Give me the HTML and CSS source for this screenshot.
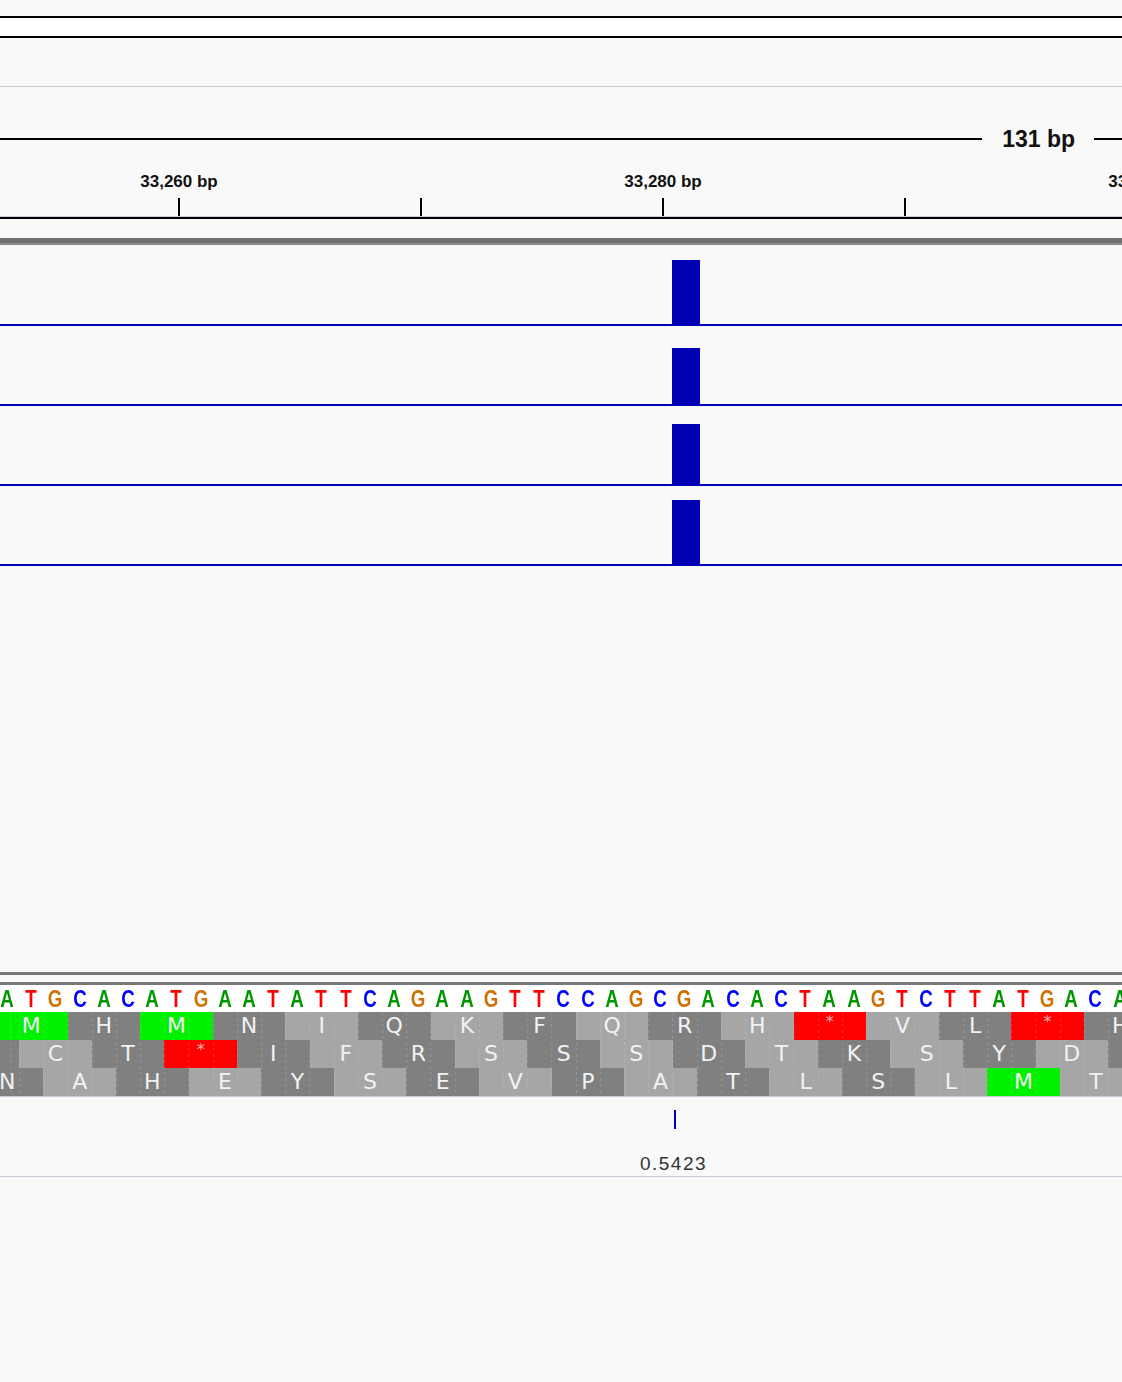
FILE: index.html
```html
<!DOCTYPE html>
<html>
<head>
<meta charset="utf-8">
<link rel="stylesheet" href="styles.css">
</head>
<body>
<div class="page">
  <div class="gap-top"></div>
  <div class="header-band"></div>
  <div class="gap-header"></div>

  <div class="ruler">
    <div class="span-row">
      <div class="span-line"></div>
      <div class="span-text">131 bp</div>
      <div class="span-line short"></div>
    </div>
    <div class="ticks">
      <div class="tick-cell"><div class="tick-label">33,260 bp</div><div class="tick"></div></div>
      <div class="tick-cell"><div class="tick-label"></div><div class="tick"></div></div>
      <div class="tick-cell"><div class="tick-label">33,280 bp</div><div class="tick"></div></div>
      <div class="tick-cell"><div class="tick-label"></div><div class="tick"></div></div>
      <div class="tick-cell"><div class="tick-label">33,300 bp</div><div class="tick"></div></div>
    </div>
    <div class="ruler-base"></div>
  </div>

  <div class="gap-data"></div>
  <div class="panel-divider"></div>

  <div class="track t1"><div class="bar" style="height:64px"></div></div>
  <div class="track"><div class="bar" style="height:56px"></div></div>
  <div class="track"><div class="bar" style="height:60px"></div></div>
  <div class="track"><div class="bar" style="height:64px"></div></div>

  <div class="gap-empty"></div>

  <div class="seq-track">
    <div class="seq-line"></div>
    <div class="seq-gap"></div>
    <div class="seq-line"></div>
    <div class="bases">
      <span class="A">A</span><span class="T">T</span><span class="G">G</span><span class="C">C</span><span class="A">A</span><span class="C">C</span><span class="A">A</span><span class="T">T</span><span class="G">G</span><span class="A">A</span>
      <span class="A">A</span><span class="T">T</span><span class="A">A</span><span class="T">T</span><span class="T">T</span><span class="C">C</span><span class="A">A</span><span class="G">G</span><span class="A">A</span><span class="A">A</span>
      <span class="G">G</span><span class="T">T</span><span class="T">T</span><span class="C">C</span><span class="C">C</span><span class="A">A</span><span class="G">G</span><span class="C">C</span><span class="G">G</span><span class="A">A</span>
      <span class="C">C</span><span class="A">A</span><span class="C">C</span><span class="T">T</span><span class="A">A</span><span class="A">A</span><span class="G">G</span><span class="T">T</span><span class="C">C</span><span class="T">T</span>
      <span class="T">T</span><span class="A">A</span><span class="T">T</span><span class="G">G</span><span class="A">A</span><span class="C">C</span><span class="A">A</span>
    </div>
    <div class="aa-block">
      <div class="aa-row f1">
        <span class="g">M</span><span class="d">H</span><span class="g">M</span><span class="d">N</span><span class="l">I</span><span class="d">Q</span><span class="l">K</span><span class="d">F</span><span class="l">Q</span><span class="d">R</span><span class="l">H</span><span class="r">*</span><span class="l">V</span><span class="d">L</span><span class="r">*</span><span class="d">H</span>
      </div>
      <div class="aa-row f2">
        <span class="d"></span><span class="l">C</span><span class="d">T</span><span class="r">*</span><span class="d">I</span><span class="l">F</span><span class="d">R</span><span class="l">S</span><span class="d">S</span><span class="l">S</span><span class="d">D</span><span class="l">T</span><span class="d">K</span><span class="l">S</span><span class="d">Y</span><span class="l">D</span><span class="d"></span>
      </div>
      <div class="aa-row f3">
        <span class="d">N</span><span class="l">A</span><span class="d">H</span><span class="l">E</span><span class="d">Y</span><span class="l">S</span><span class="d">E</span><span class="l">V</span><span class="d">P</span><span class="l">A</span><span class="d">T</span><span class="l">L</span><span class="d">S</span><span class="l">L</span><span class="g">M</span><span class="l">T</span>
      </div>
    </div>
  </div>

  <div class="score-track">
    <div class="score-mark">
      <div class="score-tick"></div>
      <div class="score-label">0.5423</div>
    </div>
  </div>
</div>
</body>
</html>
```

FILE: styles.css
```css
html, body {
  margin: 0;
  padding: 0;
  background: #f9f9f9;
}
.page {
  width: 1122px;
  height: 1382px;
  overflow: hidden;
  background: #f9f9f9;
  font-family: "Liberation Sans", Arial, sans-serif;
}
.gap-top { height: 16px; }
.header-band {
  height: 18px;
  background: #ffffff;
  border-top: 2px solid #000;
  border-bottom: 2px solid #000;
}
.gap-header { height: 48px; }

.ruler {
  border-top: 1px solid #c8c8d8;
  overflow: hidden;
}
.span-row {
  margin-top: 40px;
  height: 24px;
  display: flex;
  align-items: center;
}
.span-line {
  flex: 1;
  height: 2px;
  background: #000;
}
.span-line.short {
  flex: 0 0 28px;
}
.span-text {
  padding: 0 19px 0 20px;
  font-size: 23px;
  font-weight: bold;
  color: #111;
  line-height: 24px;
}
.ticks {
  margin-top: 22px;
  padding-left: 58px;
  display: flex;
}
.tick-cell {
  flex: 0 0 242px;
  display: flex;
  flex-direction: column;
  align-items: center;
}
.tick-label {
  height: 18px;
  line-height: 18px;
  font-size: 17px;
  font-weight: bold;
  color: #111;
  white-space: nowrap;
}
.tick {
  margin-top: 7px;
  width: 2px;
  height: 18px;
  background: #000;
}
.ruler-base {
  height: 2px;
  border-top: 1px solid #c8c8d8;
  background: #000;
}

.gap-data { height: 19px; }
.panel-divider {
  height: 5px;
  background: #707070;
  border-bottom: 2px solid #8e8e8e;
}

.track {
  height: 78px;
  border-bottom: 2px solid #0000b2;
  display: flex;
  align-items: flex-end;
}
.track.t1 { height: 79px; }
.bar {
  margin-left: 672px;
  width: 28px;
  background: #0000b2;
}

.gap-empty { height: 406px; }

.seq-line {
  height: 3px;
  background: #787878;
}
.seq-gap { height: 7px; }
.bases {
  height: 27px;
  background: #ffffff;
  display: flex;
  margin-left: -5px;
  overflow: visible;
  white-space: nowrap;
}
.bases span {
  flex: 0 0 24.2px;
  text-align: center;
  font-family: "Liberation Sans", Arial, sans-serif;
  font-weight: bold;
  font-size: 24px;
  line-height: 27px;
  transform: scaleX(0.78);
}
.bases .A { color: #009600; }
.bases .C { color: #0000ff; }
.bases .G { color: #d17105; }
.bases .T { color: #ff0000; }

.aa-block {
  position: relative;
  overflow: hidden;
  border-bottom: 1px solid #c8c8d8;
}
.aa-block::after {
  content: "";
  position: absolute;
  left: 0;
  top: 0;
  right: 0;
  bottom: 0;
  background: repeating-linear-gradient(90deg, rgba(255,255,255,0.16) 0 1px, transparent 1px 24.2px);
  background-position: 19.2px 0;
  -webkit-mask: repeating-linear-gradient(180deg, #000 0 3px, transparent 3px 6px);
  mask: repeating-linear-gradient(180deg, #000 0 3px, transparent 3px 6px);
}
.aa-row {
  height: 28px;
  display: flex;
}
.aa-row.f1 { margin-left: -5px; }
.aa-row.f2 { margin-left: -53.4px; }
.aa-row.f3 { margin-left: -29.2px; }
.aa-row span {
  flex: 0 0 72.6px;
  text-align: center;
  font-family: "DejaVu Sans", sans-serif;
  font-size: 22px;
  line-height: 28px;
  color: #f2f2f2;
}
.aa-row .d { background: #808080; }
.aa-row .l { background: #a6a6a6; }
.aa-row .g { background: #00f000; }
.aa-row .r {
  background: #ff0000;
  color: #ffb0b0;
  font-size: 16px;
  line-height: 20px;
}

.score-track {
  height: 79px;
  border-bottom: 1px solid #c8c8d8;
}
.score-mark {
  margin-left: 625px;
  width: 100px;
  display: flex;
  flex-direction: column;
  align-items: center;
}
.score-tick {
  margin-top: 13px;
  width: 2px;
  height: 19px;
  background: #0000b2;
}
.score-label {
  margin-top: 25px;
  font-size: 19px;
  line-height: 20px;
  letter-spacing: 1.5px;
  padding-right: 3px;
  color: #333;
}
```
